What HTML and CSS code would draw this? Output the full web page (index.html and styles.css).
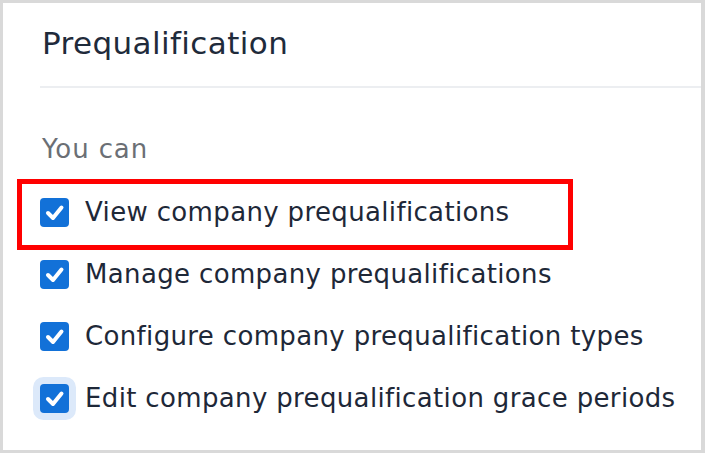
FILE: index.html
```html
<!DOCTYPE html>
<html lang="en">
<head>
    <meta charset="UTF-8">
    <meta name="viewport" content="width=device-width, initial-scale=1.0">
    <title>Prequalification</title>
    <link rel="stylesheet" href="styles.css">
</head>
<body>
    <div class="panel">
        <h2 class="panel-title">Prequalification</h2>
        <div class="panel-body">
            <p class="lead">You can</p>
            <ul class="perms">
                <li class="perm highlight">
                    <span class="check"><svg viewBox="0 0 29 29"><path d="M8 15l5 5 8.5-10.5"/></svg></span>
                    View company prequalifications
                </li>
                <li class="perm">
                    <span class="check"><svg viewBox="0 0 29 29"><path d="M8 15l5 5 8.5-10.5"/></svg></span>
                    Manage company prequalifications
                </li>
                <li class="perm">
                    <span class="check"><svg viewBox="0 0 29 29"><path d="M8 15l5 5 8.5-10.5"/></svg></span>
                    Configure company prequalification types
                </li>
                <li class="perm">
                    <span class="check focused"><svg viewBox="0 0 29 29"><path d="M8 15l5 5 8.5-10.5"/></svg></span>
                    Edit company prequalification grace periods
                </li>
            </ul>
        </div>
    </div>
</body>
</html>
```

FILE: styles.css
```css
*, *::before, *::after {
    box-sizing: border-box;
    margin: 0;
    padding: 0;
}

body {
    font-family: "DejaVu Sans", "Noto Sans", sans-serif;
    background-color: #ffffff;
    color: #1e2838;
}

.panel {
    width: 705px;
    height: 453px;
    border: 3px solid #d9d9d9;
    border-right-width: 4px;
    background-color: #ffffff;
    overflow: hidden;
}

.panel-title {
    font-size: 31px;
    font-weight: normal;
    line-height: 36px;
    letter-spacing: 0.4px;
    color: #1f2b3b;
    padding: 22px 0 0 2px;
    height: 85px;
    border-bottom: 2px solid #eceef1;
    margin-left: 37px;
}

.panel-body {
    padding: 46px 0 0 37px;
}

.lead {
    font-size: 26px;
    line-height: 30px;
    letter-spacing: 0.9px;
    color: #6b6f75;
    margin-left: 2px;
    margin-bottom: 34px;
}

.perms {
    list-style: none;
    display: flex;
    flex-direction: column;
    gap: 33px;
}

.perm {
    display: flex;
    align-items: center;
    gap: 16px;
    font-size: 26px;
    line-height: 29px;
    letter-spacing: 0.35px;
    position: relative;
}

/* red call-out around the first row */
.perm.highlight::before {
    content: "";
    position: absolute;
    left: -23px;
    top: -19px;
    width: 556px;
    height: 71px;
    border: 5px solid #ff0000;
}

.check {
    width: 29px;
    height: 29px;
    border-radius: 4px;
    background-color: #1271d8;
    display: flex;
    align-items: center;
    justify-content: center;
    flex-shrink: 0;
}

.check svg {
    width: 29px;
    height: 29px;
    fill: none;
    stroke: #ffffff;
    stroke-width: 4;
    stroke-linecap: round;
    stroke-linejoin: round;
}

.check.focused {
    box-shadow: 0 0 0 7px #dce9fa;
}
```
